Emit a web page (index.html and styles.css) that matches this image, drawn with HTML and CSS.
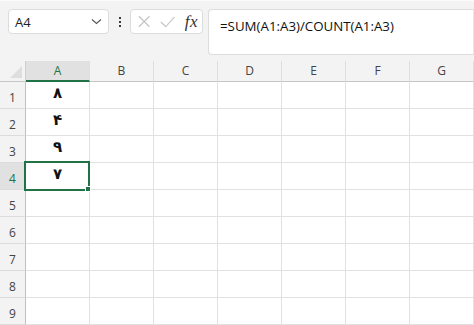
FILE: index.html
```html
<!DOCTYPE html>
<html>
	<head>
		<meta charset="UTF-8">
		<title>Sheet</title>
		<link rel="stylesheet" href="styles.css">
	</head>
	<body>
		<div id="app">
			<!--formula bar-->
			<div class="toolbar">
				<div class="namebox">
					<span class="name">A4</span>
					<svg class="chev" width="11" height="7" viewBox="0 0 11 7"><path d="M1 1.5 L5.5 5.5 L10 1.5" fill="none" stroke="#5a5a5a" stroke-width="1.2"/></svg>
				</div>
				<div class="more">
					<span></span><span></span><span></span>
				</div>
				<div class="fbtns">
					<svg width="13" height="13" viewBox="0 0 13 13"><path d="M1 1 L12 12 M12 1 L1 12" stroke="#c4c4c4" stroke-width="1.2" fill="none"/></svg>
					<svg width="16" height="12" viewBox="0 0 16 12"><path d="M1 6 L6 11 L15 1" stroke="#c4c4c4" stroke-width="1.2" fill="none"/></svg>
					<span class="fx">fx</span>
				</div>
				<div class="formula">=SUM(A1:A3)/COUNT(A1:A3)</div>
			</div>
			<!--grid-->
			<div class="grid">
				<div class="corner"><i></i></div>
				<div class="colhead sel">A</div>
				<div class="colhead">B</div>
				<div class="colhead">C</div>
				<div class="colhead">D</div>
				<div class="colhead">E</div>
				<div class="colhead">F</div>
				<div class="colhead">G</div>

				<div class="rowhead">1</div>
				<div class="cell val">۸</div><div class="cell"></div><div class="cell"></div><div class="cell"></div><div class="cell"></div><div class="cell"></div><div class="cell"></div>
				<div class="rowhead">2</div>
				<div class="cell val">۴</div><div class="cell"></div><div class="cell"></div><div class="cell"></div><div class="cell"></div><div class="cell"></div><div class="cell"></div>
				<div class="rowhead">3</div>
				<div class="cell val">۹</div><div class="cell"></div><div class="cell"></div><div class="cell"></div><div class="cell"></div><div class="cell"></div><div class="cell"></div>
				<div class="rowhead sel">4</div>
				<div class="cell val active">۷<span class="selbox"><b></b></span></div><div class="cell"></div><div class="cell"></div><div class="cell"></div><div class="cell"></div><div class="cell"></div><div class="cell"></div>
				<div class="rowhead">5</div>
				<div class="cell"></div><div class="cell"></div><div class="cell"></div><div class="cell"></div><div class="cell"></div><div class="cell"></div><div class="cell"></div>
				<div class="rowhead">6</div>
				<div class="cell"></div><div class="cell"></div><div class="cell"></div><div class="cell"></div><div class="cell"></div><div class="cell"></div><div class="cell"></div>
				<div class="rowhead">7</div>
				<div class="cell"></div><div class="cell"></div><div class="cell"></div><div class="cell"></div><div class="cell"></div><div class="cell"></div><div class="cell"></div>
				<div class="rowhead">8</div>
				<div class="cell"></div><div class="cell"></div><div class="cell"></div><div class="cell"></div><div class="cell"></div><div class="cell"></div><div class="cell"></div>
				<div class="rowhead">9</div>
				<div class="cell"></div><div class="cell"></div><div class="cell"></div><div class="cell"></div><div class="cell"></div><div class="cell"></div><div class="cell"></div>
			</div>
		</div>
	</body>
</html>
```

FILE: styles.css
```css
*{
	margin: 0px;
	padding: 0px;
	box-sizing: border-box;
}
body{
	background: #f3f3f3;
	font-family: "Open Sans", "Noto Sans", sans-serif;
	color: #333;
	overflow: hidden;
}
#app{
	width: 474px;
	height: 325px;
	border-top: 1px solid #fbfbfb;
}
.toolbar{
	display: flex;
	align-items: flex-start;
	padding: 8px 0px 0px 8px;
	height: 60px;
}
.namebox{
	width: 101px;
	height: 25px;
	background: #fff;
	border: 1px solid #dcdcdc;
	border-radius: 4px;
	display: flex;
	align-items: center;
	justify-content: space-between;
	padding: 0px 6px 0px 6px;
}
.namebox .name{
	font-size: 13px;
	color: #222;
}
.more{
	width: 21px;
	height: 25px;
	display: flex;
	flex-direction: column;
	align-items: center;
	justify-content: center;
	gap: 2px;
}
.more span{
	width: 2px;
	height: 2px;
	background: #3a3a3a;
}
.fbtns{
	width: 73px;
	height: 25px;
	background: #fff;
	border: 1px solid #dcdcdc;
	border-radius: 4px;
	display: flex;
	align-items: center;
	padding: 0px 4px 0px 7px;
	gap: 10px;
}
.fbtns .fx{
	font-family: "Liberation Serif", "DejaVu Serif", serif;
	font-style: italic;
	font-size: 17px;
	color: #333;
	margin-left: -1px;
	letter-spacing: 0.5px;
}
.formula{
	flex: 1;
	height: 46px;
	margin-left: 5px;
	background: #fff;
	border: 1px solid #dcdcdc;
	border-right-color: #e6e6e6;
	border-radius: 4px 0px 0px 4px;
	font-size: 13.3px;
	color: #111;
	padding: 7px 0px 0px 11px;
}
.grid{
	display: grid;
	grid-template-columns: 26px repeat(7, 64px);
	grid-template-rows: 21px repeat(9, 27px);
	background: #fff;
}
.corner{
	background: #f3f3f3;
	border-right: 1px solid #cfcfcf;
	border-bottom: 1px solid #c6c6c6;
	position: relative;
}
.corner i{
	position: absolute;
	right: 3px;
	bottom: 3px;
	width: 0px;
	height: 0px;
	border-left: 12px solid transparent;
	border-bottom: 12px solid #dedede;
}
.colhead{
	background: #f3f3f3;
	border-right: 1px solid #dedede;
	border-bottom: 1px solid #c6c6c6;
	font-size: 12px;
	color: #444;
	text-align: center;
	line-height: 20px;
}
.colhead.sel{
	background: #e1e1e1;
	color: #217346;
	border-bottom: 2px solid #217346;
}
.rowhead{
	background: #f3f3f3;
	border-right: 1px solid #c0c0c0;
	border-bottom: 1px solid #dcdcdc;
	font-size: 12px;
	color: #444;
	text-align: center;
	line-height: 32px;
}
.rowhead.sel{
	background: #e1e1e1;
	color: #217346;
}
.cell{
	border-right: 1px solid #e1e1e1;
	border-bottom: 1px solid #e1e1e1;
}
.val{
	font-family: "DejaVu Sans", sans-serif;
	font-size: 15px;
	font-weight: bold;
	color: #111;
	text-align: center;
	line-height: 22px;
}
.active{
	position: relative;
}
.selbox{
	position: absolute;
	left: -2px;
	top: -2px;
	width: 66px;
	height: 30px;
	border: 2px solid #217346;
}
.selbox b{
	position: absolute;
	right: -3px;
	bottom: -3px;
	width: 6px;
	height: 6px;
	background: #217346;
	border: 1px solid #fff;
}
```
